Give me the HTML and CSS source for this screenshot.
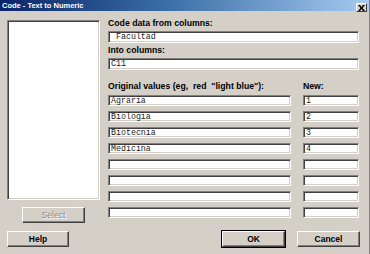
FILE: index.html
```html
<!DOCTYPE html>
<html>
<head>
<meta charset="utf-8">
<link rel="stylesheet" href="styles.css">
</head>
<body>
<div class="win">
  <div class="titlebar">
    <span class="title">Code - Text to Numeric</span>
    <span class="close"><svg width="7" height="6" viewBox="0 0 7 6"><path d="M0 0h2l1.5 2 1.5-2h2l-2.5 3 2.5 3h-2l-1.5-2-1.5 2h-2l2.5-3z" fill="#000"/></svg></span>
  </div>
  <div class="main">
    <div class="left">
      <div class="listbox sunken"></div>
      <div class="btn select">Select</div>
    </div>
    <div class="right">
      <div class="lbl">Code data from columns:</div>
      <div class="field sunken tall"> Facultad</div>
      <div class="lbl">Into columns:</div>
      <div class="field sunken tall">C11</div>
      <div class="grid">
        <div class="lbl">Original values (eg,  red  "light blue"):</div>
        <div class="lbl">New:</div>
        <div class="field sunken">Agraria</div><div class="field sunken">1</div>
        <div class="field sunken">Biologia</div><div class="field sunken">2</div>
        <div class="field sunken">Biotecnia</div><div class="field sunken">3</div>
        <div class="field sunken">Medicina</div><div class="field sunken">4</div>
        <div class="field sunken"></div><div class="field sunken"></div>
        <div class="field sunken"></div><div class="field sunken"></div>
        <div class="field sunken"></div><div class="field sunken"></div>
        <div class="field sunken"></div><div class="field sunken"></div>
      </div>
    </div>
  </div>
  <div class="footer">
    <div class="btn help">Help</div>
    <div class="btn ok">OK</div>
    <div class="btn cancel">Cancel</div>
  </div>
</div>
</body>
</html>
```
FILE: styles.css
```css
html, body {
  margin: 0;
  padding: 0;
  background: #d4d0c8;
}
.win {
  width: 370px;
  height: 254px;
  box-sizing: border-box;
  border-right: 1px solid #808080;
  background: #d4d0c8;
  font-family: "Liberation Sans", Arial, sans-serif;
  display: flex;
  flex-direction: column;
}
.titlebar {
  height: 11px;
  background: linear-gradient(to right, #0a246a 0%, #3a6ea5 45%, #a6caf0 100%);
  display: flex;
  align-items: center;
  justify-content: space-between;
  padding: 0 2px 0 2px;
}
.title {
  color: #fff;
  font-weight: bold;
  font-size: 7.5px;
  line-height: 11px;
  white-space: nowrap;
}
.close {
  width: 11px;
  height: 9px;
  margin-top: 4px;
  box-sizing: border-box;
  background: #d4d0c8;
  border: 1px solid;
  border-color: #fff #404040 #404040 #fff;
  display: flex;
  align-items: center;
  justify-content: center;
}
.main {
  display: flex;
  padding: 6px 0 0 7px;
}
.left {
  width: 93px;
  padding-top: 3px;
  display: flex;
  flex-direction: column;
}
.listbox {
  height: 180px;
  background: #fff;
}
.sunken {
  box-sizing: border-box;
  border: 1px solid;
  border-color: #808080 #fff #fff #808080;
  box-shadow: inset 1px 1px 0 #404040, inset -1px -1px 0 #d4d0c8;
}
.btn {
  box-sizing: border-box;
  height: 16px;
  width: 63px;
  border: 1px solid;
  border-color: #fff #404040 #404040 #fff;
  box-shadow: inset -1px -1px 0 #808080;
  font-weight: bold;
  font-size: 8.5px;
  line-height: 14px;
  text-align: center;
  color: #000;
}
.select {
  margin: 7px 0 0 15px;
  color: #8a8a8a;
  font-weight: normal;
  text-shadow: 1px 1px 0 #fff;
}
.right {
  width: 251px;
  margin-left: 8px;
  display: flex;
  flex-direction: column;
}
.lbl {
  font-weight: bold;
  font-size: 8.7px;
  line-height: 12px;
  height: 12px;
  color: #000;
  white-space: pre;
}
.field {
  background: #fff;
  height: 11px;
  font-family: "Liberation Mono", "Courier New", monospace;
  font-size: 8.3px;
  line-height: 9px;
  padding-left: 2px;
  color: #222;
  white-space: pre;
}
.tall {
  height: 12px;
  line-height: 10px;
  margin-top: 2px;
  margin-bottom: 1px;
}
.right > .tall:nth-of-type(4) {
  margin-bottom: 10px;
}
.grid {
  display: grid;
  grid-template-columns: 183px 56px;
  column-gap: 12px;
  row-gap: 5px;
}
.grid > .lbl {
  margin-bottom: -2px;
}
.footer {
  display: flex;
  margin-top: 8px;
  padding: 0 9px 0 7px;
}
.help {
  width: 62px;
}
.ok {
  margin-left: auto;
  outline: 1px solid #000;
}
.cancel {
  margin-left: 12px;
}
```
